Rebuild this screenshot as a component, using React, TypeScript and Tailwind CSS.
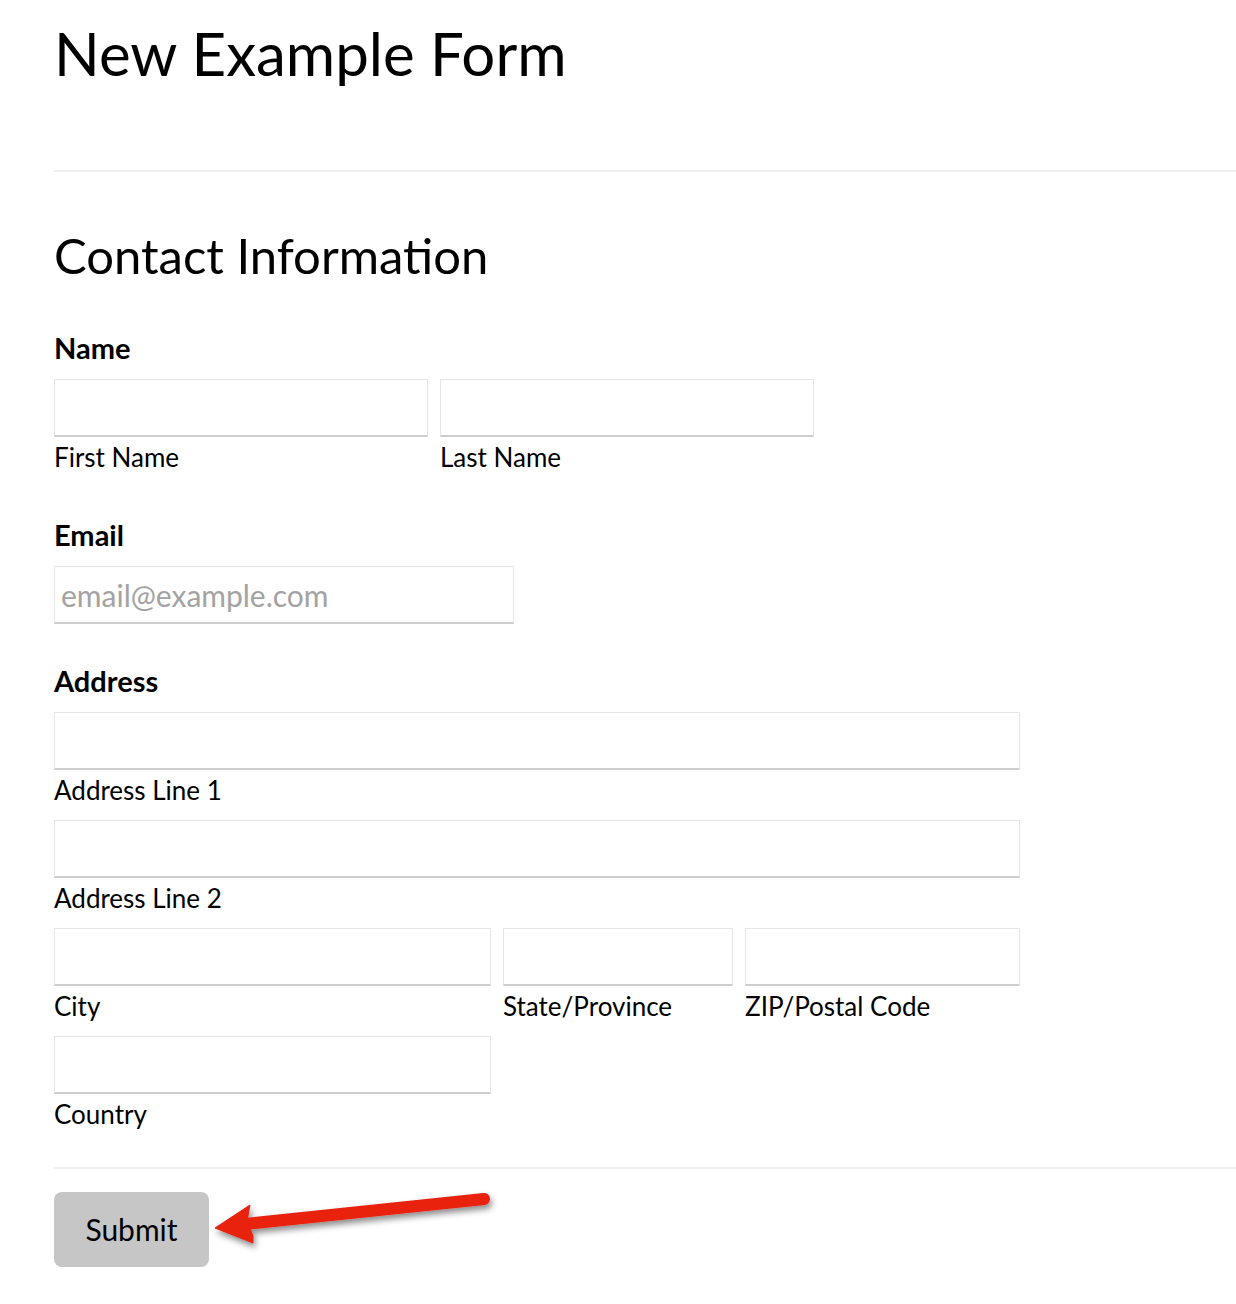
import React from "react";

const font = { fontFamily: "Lato, 'Noto Sans', sans-serif" };

const Field: React.FC<{ width: string; label: string; placeholder?: string }> = ({ width, label, placeholder }) => (
    <div className={`flex flex-col ${width}`}>
        <input
            type="text"
            placeholder={placeholder}
            className="h-[58px] w-full border border-[#e6e6e6] border-b-2 border-b-[#cdcdcd] bg-white px-[6px] text-[26px] text-black placeholder:text-[#a3a3a3] focus:outline-none"
        />
        {label && <span className="mt-[5px] text-[26px] leading-[30px] text-black">{label}</span>}
    </div>
);

const App: React.FC = () => {
    return (
        <div className="relative min-h-screen w-full bg-white pl-[54px] pt-[17px] text-black" style={font}>
            <h1 className="text-[60px] font-normal leading-[72px]">New Example Form</h1>
            <hr className="mt-[81px] border-0 border-t-2 border-[#eeeeee]" />

            <h2 className="mt-[54px] text-[49px] font-normal leading-[58px]">Contact Information</h2>

            <form className="flex flex-col">
                <label className="mt-[47px] text-[29px] font-bold leading-[34px]">Name</label>
                <div className="mt-[14px] flex gap-[12px]">
                    <Field width="w-[374px]" label="First Name" />
                    <Field width="w-[374px]" label="Last Name" />
                </div>

                <label className="mt-[46px] text-[29px] font-bold leading-[34px]">Email</label>
                <div className="mt-[14px] flex">
                    <input
                        type="email"
                        placeholder="email@example.com"
                        className="h-[58px] w-[460px] border border-[#e6e6e6] border-b-2 border-b-[#cdcdcd] bg-white px-[6px] text-[30px] text-black placeholder:text-[#a3a3a3] focus:outline-none"
                    />
                </div>

                <label className="mt-[40px] text-[29px] font-bold leading-[34px]">Address</label>
                <div className="mt-[14px] flex flex-col gap-[15px]">
                    <Field width="w-[966px]" label="Address Line 1" />
                    <Field width="w-[966px]" label="Address Line 2" />
                    <div className="flex gap-[12px]">
                        <Field width="w-[437px]" label="City" />
                        <Field width="w-[230px]" label="State/Province" />
                        <Field width="w-[275px]" label="ZIP/Postal Code" />
                    </div>
                    <Field width="w-[437px]" label="Country" />
                </div>

                <hr className="mt-[38px] border-0 border-t-2 border-[#eeeeee]" />

                <div className="mt-[23px] flex">
                    <button
                        type="submit"
                        className="flex h-[75px] w-[155px] items-center justify-center rounded-[8px] bg-[#c6c6c6] text-[30px] text-black"
                    >
                        Submit
                    </button>
                </div>
            </form>

            <svg className="pointer-events-none absolute left-[200px] top-[1180px]" width="310" height="80" viewBox="0 0 310 80">
                <defs>
                    <filter id="sh" x="-20%" y="-50%" width="140%" height="200%">
                        <feDropShadow dx="2" dy="4" stdDeviation="3" floodColor="#000" floodOpacity="0.45" />
                    </filter>
                </defs>
                <g filter="url(#sh)" fill="#e8200f" stroke="#e8200f">
                    <line x1="45" y1="44" x2="284" y2="19" strokeWidth="12" strokeLinecap="round" />
                    <polygon points="15,48 50,25 47,41 53,56 53,63" strokeWidth="1" strokeLinejoin="round" />
                </g>
            </svg>
        </div>
    );
};

export default App;
